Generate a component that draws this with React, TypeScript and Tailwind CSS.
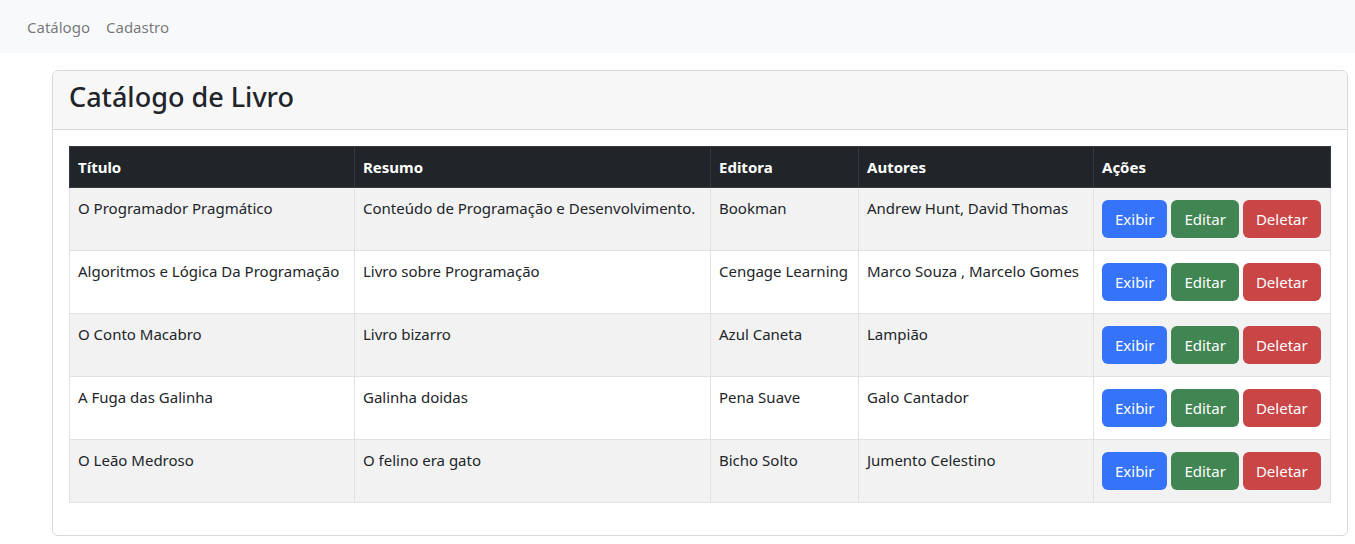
const livros = [
  {
    titulo: "O Programador Pragmático",
    resumo: "Conteúdo de Programação e Desenvolvimento.",
    editora: "Bookman",
    autores: "Andrew Hunt, David Thomas",
  },
  {
    titulo: "Algoritmos e Lógica Da Programação",
    resumo: "Livro sobre Programação",
    editora: "Cengage Learning",
    autores: "Marco Souza , Marcelo Gomes",
  },
  { titulo: "O Conto Macabro", resumo: "Livro bizarro", editora: "Azul Caneta", autores: "Lampião" },
  { titulo: "A Fuga das Galinha", resumo: "Galinha doidas", editora: "Pena Suave", autores: "Galo Cantador" },
  { titulo: "O Leão Medroso", resumo: "O felino era gato", editora: "Bicho Solto", autores: "Jumento Celestino" },
];

const font = { fontFamily: '"Segoe UI", "Noto Sans", "Liberation Sans", sans-serif' };

export default function App() {
  return (
    <div className="min-h-screen bg-white text-[15px] leading-6 text-[#212529]" style={font}>
      <nav className="flex h-[53px] items-center gap-4 bg-[#f8f9fa] px-[27px]">
        <a className="text-[rgba(0,0,0,0.55)]">Catálogo</a>
        <a className="text-[rgba(0,0,0,0.55)]">Cadastro</a>
      </nav>

      <div className="pl-[52px] pr-[7px] pt-[17px]">
        <div className="rounded-md border border-[#d9d9d9]">
          <div className="h-[59px] rounded-t-md border-b border-[#d9d9d9] bg-[#f7f7f7] px-4 pt-[10px]">
            <h3 className="text-[27px] font-medium leading-[1.2]">Catálogo de Livro</h3>
          </div>
          <div className="p-4">
            <table className="mb-4 w-full border-collapse whitespace-nowrap">
              <thead>
                <tr className="bg-[#212529] text-left text-white">
                  <Th w="w-[285px]">Título</Th>
                  <Th w="w-[356px]">Resumo</Th>
                  <Th w="w-[148px]">Editora</Th>
                  <Th w="w-[235px]">Autores</Th>
                  <Th w="">Ações</Th>
                </tr>
              </thead>
              <tbody>
                {livros.map((l, i) => (
                  <tr key={i} className={i % 2 === 0 ? "bg-[#f2f2f2]" : "bg-white"}>
                    <Td>{l.titulo}</Td>
                    <Td>{l.resumo}</Td>
                    <Td>{l.editora}</Td>
                    <Td>{l.autores}</Td>
                    <td className="border border-[#dee2e6] px-2 py-2 align-top">
                      <div className="my-1 flex gap-1">
                        <button className="h-[38px] rounded-md bg-[#3574f8] px-[13px] text-white">Exibir</button>
                        <button className="h-[38px] rounded-md bg-[#418553] px-[13px] text-white">Editar</button>
                        <button className="h-[38px] rounded-md bg-[#ca4545] px-[13px] text-white">Deletar</button>
                      </div>
                    </td>
                  </tr>
                ))}
              </tbody>
            </table>
          </div>
        </div>
      </div>
    </div>
  );
}

function Th({ children, w }: { children: React.ReactNode; w: string }) {
  return (
    <th className={`${w} h-[41px] border border-[#32383e] px-2 py-2 font-bold leading-6`}>{children}</th>
  );
}

function Td({ children }: { children: React.ReactNode }) {
  return <td className="border border-[#dee2e6] px-2 py-2 align-top leading-6">{children}</td>;
}
